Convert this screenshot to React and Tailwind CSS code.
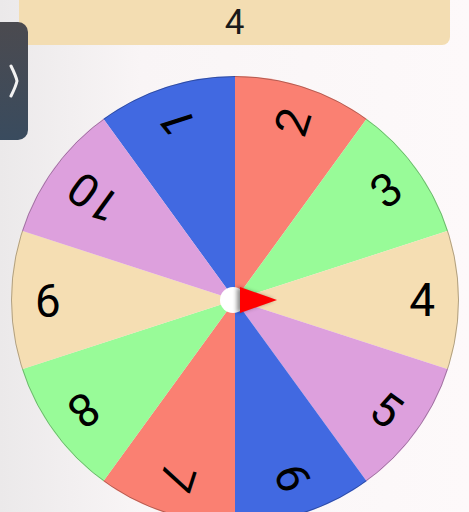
import React from "react";

const COLORS = ["#4169e1", "#fa8072", "#98fb98", "#f5deb3", "#dda0dd"];
const CX = 224;
const CY = 224;
const R = 224;

// angle in degrees, clockwise from top
const pt = (deg, r) => {
  const a = (deg * Math.PI) / 180;
  return [CX + r * Math.sin(a), CY - r * Math.cos(a)];
};

const Wheel = () => {
  const labels = [1, 2, 3, 4, 5, 6, 7, 8, 9, 10];
  return (
    <svg
      width="448"
      height="448"
      viewBox="0 0 448 448"
      className="block overflow-visible"
      style={{ fontFamily: 'Roboto, "Liberation Sans", sans-serif' }}
    >
      {labels.map((n, i) => {
        const a0 = (n - 2) * 36;
        const a1 = a0 + 36;
        const [x0, y0] = pt(a0, R);
        const [x1, y1] = pt(a1, R);
        return (
          <path
            key={n}
            d={`M${CX},${CY} L${x0},${y0} A${R},${R} 0 0 1 ${x1},${y1} Z`}
            fill={COLORS[i % 5]}
          />
        );
      })}
      <circle cx={CX} cy={CY} r={R - 0.5} fill="none" stroke="rgba(0,0,0,0.28)" strokeWidth="1" />
      {labels.map((n) => {
        const mid = (n - 1.5) * 36;
        const [x, y] = pt(mid, 200);
        return (
          <text
            key={n}
            x={x}
            y={y}
            fill="#000"
            fontSize="46"
            textAnchor="end"
            dominantBaseline="central"
            transform={`rotate(${mid - 90} ${x} ${y})`}
          >
            {n}
          </text>
        );
      })}
      {/* pointer */}
      <circle cx="222" cy="224" r="13" fill="#ffffff" />
      <polygon
        points="229,211 266,224 229,237"
        fill="#ff0000"
        style={{ filter: "drop-shadow(-3px 0 2px rgba(0,0,0,0.45))" }}
      />
    </svg>
  );
};

export default function App() {
  return (
    <div className="relative h-[512px] w-full overflow-hidden bg-linear-to-r from-[#ebe9ea] via-[#f9f5f6] via-30% to-[#fdf9fa] font-['Roboto','Liberation_Sans',sans-serif]">
      {/* 結果バー */}
      <div className="mx-[19px] flex h-[45px] items-center justify-center rounded-b-[8px] bg-[#f3ddb2]">
        <span className="text-[35px] leading-none text-[#1a1a1a]">4</span>
      </div>

      {/* ホイール */}
      <div className="mt-[31px] flex justify-center">
        <Wheel />
      </div>

      {/* サイドタブ */}
      <button className="absolute left-0 top-[22px] flex h-[118px] w-[28px] items-center justify-center rounded-r-[10px] bg-linear-to-b from-[#4b4a4f] to-[#394b5e]">
        <svg width="12" height="34" viewBox="0 0 12 34">
          <path d="M3,2 Q8,12 9,17 Q8,22 3,32" fill="none" stroke="#f2f2f2" strokeWidth="3" strokeLinecap="round" />
        </svg>
      </button>
    </div>
  );
}
